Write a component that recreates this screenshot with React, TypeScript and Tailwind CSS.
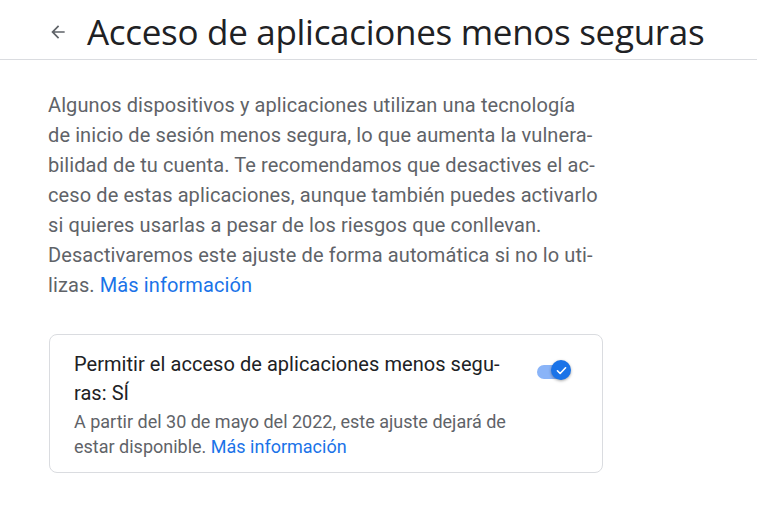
import React from "react";

function Toggle() {
  return (
    <div className="relative w-[36px] h-[22px] shrink-0">
      <div className="absolute left-[1px] top-[5px] w-[30px] h-[14px] rounded-full bg-[#8ab4f8]" />
      <div className="absolute left-[15px] top-0 w-[20px] h-[20px] rounded-full bg-[#1a73e8] shadow-[0_1px_3px_rgba(0,0,0,0.35)] flex items-center justify-center">
        <svg width="13" height="13" viewBox="0 0 24 24" fill="none">
          <path d="M4.5 12.5l5 5L19.5 7" stroke="white" strokeWidth="3" strokeLinecap="round" strokeLinejoin="round" />
        </svg>
      </div>
    </div>
  );
}

export default function App() {
  return (
    <div className="w-[757px] h-[511px] bg-white font-['Roboto',sans-serif] overflow-hidden">
      <div className="h-[60px] border-b border-[#dadce0] flex items-center pl-[48px]">
        <svg width="20" height="20" viewBox="0 0 24 24" className="text-[#5f6368] mt-[4px]">
          <path d="M20 11H7.83l5.59-5.59L12 4l-8 8 8 8 1.41-1.41L7.83 13H20v-2z" fill="currentColor" />
        </svg>
        <h1 className="ml-[19px] text-[35px] leading-[40px] text-[#202124] font-['Open_Sans',sans-serif] tracking-[-0.3px] mt-[4px]">
          Acceso de aplicaciones menos seguras
        </h1>
      </div>

      <div className="pl-[48px] pt-[30px]">
        <p className="text-[20px] leading-[30px] text-[#5f6368] tracking-[0.1px]">
          Algunos dispositivos y aplicaciones utilizan una tecnología
          <br />
          de inicio de sesión menos segura, lo que aumenta la vulnera-
          <br />
          bilidad de tu cuenta. Te recomendamos que desactives el ac-
          <br />
          ceso de estas aplicaciones, aunque también puedes activarlo
          <br />
          si quieres usarlas a pesar de los riesgos que conllevan.
          <br />
          Desactivaremos este ajuste de forma automática si no lo uti-
          <br />
          lizas. <span className="text-[#1a73e8]">Más información</span>
        </p>

        <div className="mt-[34px] ml-[1px] w-[554px] border border-[#dadce0] rounded-[8px] pl-[24px] pr-[30px] pt-[15px] pb-[13px] flex items-start justify-between">
          <div>
            <div className="text-[20px] leading-[29px] text-[#202124] tracking-[0.05px]">
              Permitir el acceso de aplicaciones menos segu-
              <br />
              ras: SÍ
            </div>
            <div className="text-[18px] leading-[25px] text-[#5f6368] mt-[1px]">
              A partir del 30 de mayo del 2022, este ajuste dejará de
              <br />
              estar disponible. <span className="text-[#1a73e8]">Más información</span>
            </div>
          </div>
          <div className="mt-[10px]">
            <Toggle />
          </div>
        </div>
      </div>
    </div>
  );
}
